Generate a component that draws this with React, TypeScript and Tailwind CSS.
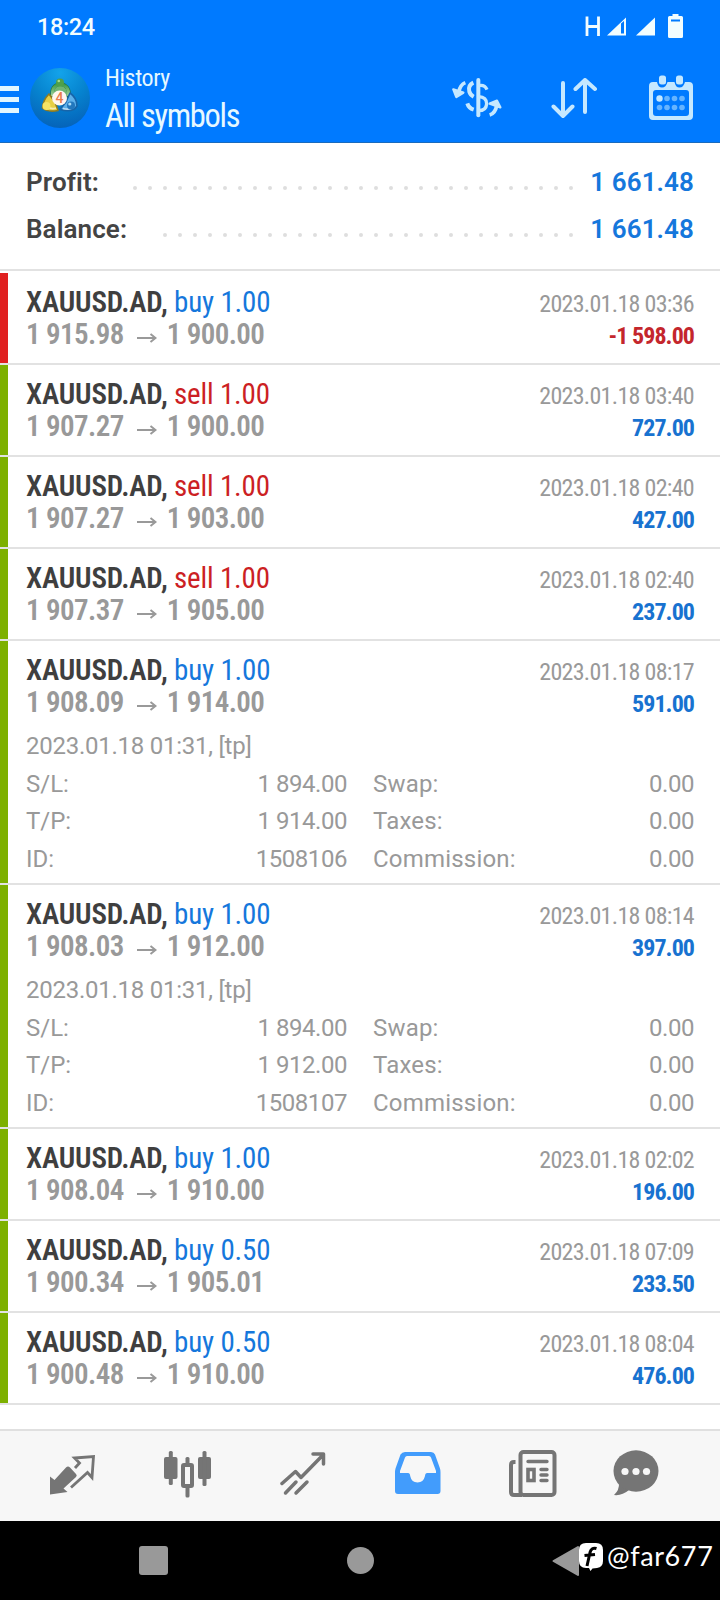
import React from 'react';

interface Deal {
  side: 'buy' | 'sell';
  volume: string;
  open: string;
  close: string;
  time: string;
  profit: string;
  details?: { opened: string; sl: string; tp: string; id: string };
}

const deals: Deal[] = [
  { side: 'buy', volume: '1.00', open: '1 915.98', close: '1 900.00', time: '2023.01.18 03:36', profit: '-1 598.00' },
  { side: 'sell', volume: '1.00', open: '1 907.27', close: '1 900.00', time: '2023.01.18 03:40', profit: '727.00' },
  { side: 'sell', volume: '1.00', open: '1 907.27', close: '1 903.00', time: '2023.01.18 02:40', profit: '427.00' },
  { side: 'sell', volume: '1.00', open: '1 907.37', close: '1 905.00', time: '2023.01.18 02:40', profit: '237.00' },
  {
    side: 'buy', volume: '1.00', open: '1 908.09', close: '1 914.00', time: '2023.01.18 08:17', profit: '591.00',
    details: { opened: '2023.01.18 01:31, [tp]', sl: '1 894.00', tp: '1 914.00', id: '1508106' },
  },
  {
    side: 'buy', volume: '1.00', open: '1 908.03', close: '1 912.00', time: '2023.01.18 08:14', profit: '397.00',
    details: { opened: '2023.01.18 01:31, [tp]', sl: '1 894.00', tp: '1 912.00', id: '1508107' },
  },
  { side: 'buy', volume: '1.00', open: '1 908.04', close: '1 910.00', time: '2023.01.18 02:02', profit: '196.00' },
  { side: 'buy', volume: '0.50', open: '1 900.34', close: '1 905.01', time: '2023.01.18 07:09', profit: '233.50' },
  { side: 'buy', volume: '0.50', open: '1 900.48', close: '1 910.00', time: '2023.01.18 08:04', profit: '476.00' },
];

const StatusBar: React.FC = () => (
  <div className="flex h-[54px] items-center justify-between pl-[37px] pr-[36px] text-[#f2fdff]">
    <span className="text-[23.5px] font-medium leading-8 tracking-[-0.4px]">18:24</span>
    <svg width="100" height="28" viewBox="0 0 100 28" fill="currentColor">
      <path d="M3 3.500v19.500M14.500 3.500v19.500M3 13.500h12" stroke="currentColor" strokeWidth="2.800" fill="none" />
      <path fillRule="evenodd" d="M23 22.500 42 4.500V22.500ZM37 10.500V20.500H40V8Z" />
      <path d="M52 22.500 71 4.500V22.500Z" />
      <path fillRule="evenodd" d="M88.500 1h6v2h3q1.500 0 1.500 1.500v19q0 1.500-1.500 1.500h-12q-1.500 0-1.500-1.500v-19Q84 3 85.500 3h3ZM87 6.500v2h9v-2Z" />
    </svg>
  </div>
);

const Logo: React.FC = () => (
  <svg className="ml-[11px] shrink-0" width="60" height="60" viewBox="0 0 60 60">
    <defs>
      <radialGradient id="sky" cx="50%" cy="8%" r="95%">
        <stop offset="0" stopColor="#13a3ea" />
        <stop offset="0.5" stopColor="#0683cf" />
        <stop offset="1" stopColor="#0561b8" />
      </radialGradient>
      <linearGradient id="leaf" x1="0" y1="0" x2="0" y2="1">
        <stop offset="0" stopColor="#3f9b49" />
        <stop offset="1" stopColor="#a5d5a0" />
      </linearGradient>
    </defs>
    <circle cx="30" cy="30" r="30" fill="url(#sky)" />
    <path d="M22 29q-1-12 8-13 10 1 9 13Z" fill="#6fb573" stroke="#25703a" strokeWidth="3.500" strokeLinejoin="round" />
    <path d="M22.500 28q-1-11 7.500-11.500 9.500.5 8.500 11.500" fill="none" stroke="url(#leaf)" strokeWidth="3" />
    <path d="M19 26q-6 6-6.500 14 5 4.500 15.500 2.500L25 34Z" fill="#e6cf45" stroke="#917c20" strokeWidth="1.600" strokeLinejoin="round" />
    <path d="M40 25q7 5 7 13-4 7-17 3.500L36 34Z" fill="#5cb0ea" stroke="#1764a8" strokeWidth="1.600" strokeLinejoin="round" />
    <path d="M18 39q3 2.500 8 1M33 40.500q5 1.500 9-.5" fill="none" stroke="#fff" strokeOpacity="0.600" strokeWidth="1.800" />
    <circle cx="30" cy="14.500" r="4" fill="#4fa04a" />
    <circle cx="28.800" cy="13" r="1.300" fill="#a4dc8d" />
    <circle cx="16.500" cy="38" r="4" fill="#f4e365" />
    <circle cx="41" cy="37.500" r="4" fill="#2277bd" />
    <circle cx="39.800" cy="36" r="1.600" fill="#a9dcf8" />
    <circle cx="29.500" cy="30" r="7.500" fill="#fff6ef" />
    <text x="29.500" y="35" textAnchor="middle" fontSize="14" fontWeight="500" fill="#ea7d4c">4</text>
  </svg>
);

const Header: React.FC = () => (
  <header className="h-[143px] border-b border-[#1a6bbd] bg-[#007aff]">
    <StatusBar />
    <div className="flex h-[88px] items-center text-[#d9f3ff]">
      <div className="flex w-[19px] shrink-0 flex-col gap-[6.500px] pt-[3px]">
        <span className="h-[4.500px] bg-[#e2f6ff]" />
        <span className="h-[4.500px] bg-[#e2f6ff]" />
        <span className="h-[4.500px] bg-[#e2f6ff]" />
      </div>
      <Logo />
      <div className="ml-[15px] flex-1 [font-stretch:75%]">
        <div className="text-[24px] leading-[34px] tracking-[-0.400px] text-[#e6f8ff]">History</div>
        <div className="mt-[2px] text-[32.500px] leading-[38px] tracking-[-1.300px] text-[#e6f8ff]">All symbols</div>
      </div>
      <svg className="mr-[49px]" width="50" height="42" viewBox="0 0 150 126" fill="none" stroke="#c5e8ff">
        <path d="M79 9v106" strokeWidth="12" strokeLinecap="round" />
        <path d="M80 26q18-4 25 12M80 59q24 1 24 22-2 20-24 20" strokeWidth="10" />
        <path d="M64 17q-17 8-12 27 3 10 13 15M46 79q4 14 19 19" strokeWidth="12" />
        <path d="M40 17q-15 6-20 28" strokeWidth="11" />
        <path d="M4 37 34 47 13 60Z" fill="#c5e8ff" strokeWidth="7" strokeLinejoin="round" />
        <path d="M113 114q17-5 21-28" strokeWidth="11" />
        <path d="M113 80l22-9 10 20Z" fill="#c5e8ff" strokeWidth="7" strokeLinejoin="round" />
      </svg>
      <svg className="mr-[52px]" width="46" height="42" viewBox="0 0 46 42" fill="none" stroke="#c5e8ff" strokeWidth="4" strokeLinecap="round" strokeLinejoin="round">
        <path d="M12 6v33M2.500 29.500 12 39l9.500-9.500" />
        <path d="M34 35V3M24.500 12 34 3l10 9" />
      </svg>
      <svg className="mr-[27px]" width="44" height="46" viewBox="0 0 44 46">
        <path fillRule="evenodd" fill="#c5e8ff" d="M4 7h4q1 5.500 5 5.500T18.500 7h7q1 5.500 5 5.500T36 7h4q4 0 4 4v30q0 4-4 4H4q-4 0-4-4V11q0-4 4-4Zm3 8q-3 0-3 3v20q0 3 3 3h30q3 0 3-3V18q0-3-3-3Z" />
        <rect x="10" y="0.500" width="7" height="9" rx="2.500" fill="#c5e8ff" />
        <rect x="27" y="0.500" width="7" height="9" rx="2.500" fill="#c5e8ff" />
        <circle cx="10.500" cy="23.500" r="3.200" fill="#c5e8ff" />
        <g fill="#66b4ff">
          <circle cx="18" cy="23.500" r="2.800" />
          <circle cx="25.500" cy="23.500" r="2.800" />
          <circle cx="33" cy="23.500" r="2.800" />
          <circle cx="10.500" cy="32.500" r="2.800" />
          <circle cx="18" cy="32.500" r="2.800" />
          <circle cx="25.500" cy="32.500" r="2.800" />
          <circle cx="33" cy="32.500" r="2.800" />
        </g>
      </svg>
    </div>
  </header>
);

const SummaryRow: React.FC<{ label: string; value: string; dots: number }> = ({ label, value, dots }) => (
  <div className="flex h-[47px] items-center justify-between">
    <span className="text-[26px] font-semibold tracking-[0.100px] text-[#444]">{label}</span>
    <div className="ml-auto mr-[17px] flex gap-[11.050px] pt-[11px]">
      {Array.from({ length: dots }).map((_, i) => (
        <span key={i} className="h-1 w-1 rounded-full bg-[#dedede]" />
      ))}
    </div>
    <span className="text-[26px] font-semibold tracking-[0.100px] text-[#1577dc]">{value}</span>
  </div>
);

const DetailRow: React.FC<{ left: string; leftValue: string; right: string }> = ({ left, leftValue, right }) => (
  <div className="flex h-[37.500px] items-center">
    <span>{left}</span>
    <span className="ml-auto tracking-[-0.450px]">{leftValue}</span>
    <div className="ml-[26px] flex w-[321px] justify-between">
      <span className="tracking-[0.200px]">{right}</span>
      <span className="tracking-[-0.450px]">0.00</span>
    </div>
  </div>
);

const DealRow: React.FC<{ deal: Deal }> = ({ deal }) => {
  const loss = deal.profit.startsWith('-');

  return (
    <div className="border-b-2 border-[#e2e2e2]">
      <div className={`border-l-8 pl-[18px] pr-[26px] ${loss ? 'border-[#e02020]' : 'border-[#7db000]'} ${deal.details ? 'h-[242px]' : 'h-[90px]'}`}>
        <div className="flex h-[77px] justify-between pt-[13px] [font-stretch:75%]">
          <div>
            <div className="text-[29px] leading-8 tracking-[-0.180px]">
              <span className="font-semibold text-[#3f3f3f]">XAUUSD.AD,</span>{' '}
              <span className={deal.side === 'buy' ? 'text-[#1577dc]' : 'text-[#cc1f24]'}>
                {deal.side} {deal.volume}
              </span>
            </div>
            <div className="flex items-center text-[29px] font-semibold leading-8 tracking-[-0.600px] text-[#999]">
              {deal.open}
              <svg className="ml-[13px] mr-[10px] mt-[7px]" width="20" height="12" viewBox="0 0 20 12" fill="none" stroke="#999" strokeWidth="2">
                <path d="M0 6h18.500M13.500 2 18.500 6l-5 4" />
              </svg>
              {deal.close}
            </div>
          </div>
          <div className="pt-[1.500px] text-right text-[24px] leading-8">
            <div className="tracking-[-0.700px] text-[#999]">{deal.time}</div>
            <div className={`font-bold tracking-[-0.950px] ${loss ? 'text-[#c4262c]' : 'text-[#1872d0]'}`}>{deal.profit}</div>
          </div>
        </div>
        {deal.details && (
          <div className="pt-[9px] text-[24px] text-[#999]">
            <div className="flex h-[38px] items-center tracking-[-0.250px]">{deal.details.opened}</div>
            <DetailRow left="S/L:" leftValue={deal.details.sl} right="Swap:" />
            <DetailRow left="T/P:" leftValue={deal.details.tp} right="Taxes:" />
            <DetailRow left="ID:" leftValue={deal.details.id} right="Commission:" />
          </div>
        )}
      </div>
    </div>
  );
};

const TabBar: React.FC = () => (
  <nav className="flex h-[92px] items-start border-t-2 border-[#e0e0e0] bg-[#f7f7f7] pl-[49px] pt-[19px] text-[#757575]">
    <svg className="mr-[68px]" width="47" height="48" viewBox="0 0 47 48">
      <path fill="currentColor" d="M1 26.500 5.500 30 17 17.500q2-2 4 0l6 6.500q1.500 1.500 0 3L14.500 38.500 18.500 42 1 44.500Z" />
      <path fill="none" stroke="currentColor" strokeWidth="2.800" d="M22 37.500 38.500 22.500 43 27.500 44.500 6.500 25.500 8l5 5-4.500 5" />
    </svg>
    <svg className="mr-[68px]" width="48" height="48" viewBox="0 0 48 48">
      <g fill="currentColor">
        <rect x="0" y="7" width="13.500" height="22" rx="2" />
        <rect x="4.800" y="1" width="4" height="34" rx="1.500" />
        <rect x="34" y="7" width="13" height="22" rx="2" />
        <rect x="38.500" y="1" width="4" height="35" rx="1.500" />
        <rect x="21.500" y="7" width="4" height="8" rx="1.500" />
        <rect x="21.500" y="36" width="4" height="11.500" rx="1.500" />
      </g>
      <rect x="19" y="15" width="9" height="21" rx="1" fill="none" stroke="currentColor" strokeWidth="4" />
    </svg>
    <svg className="mr-[69px]" width="46" height="48" viewBox="0 0 46 48" fill="none" stroke="currentColor" strokeWidth="3.500" strokeLinecap="round" strokeLinejoin="round">
      <path d="M2 33.500 15.500 21.500 21 27.500 42.500 5.500M33 4h10.500v10" />
      <path d="M5.500 43 16 32M16 43 27 32" />
    </svg>
    <svg className="mr-[68px]" width="46" height="48" viewBox="0 0 46 48">
      <path fill="#429cfc" fillRule="evenodd" d="M10 2h26q3 0 4 2.500l5 14q.5 1.500.5 4V41q0 3-3 3H3q-3 0-3-3V22.500q0-2 .500-4L5.500 4.500Q7 2 10 2ZM12 6q-1.500 0-2 1.500L5 21v2h8q2 0 2.200 3Q16.500 32.500 22.500 32.500T30 26q.200-3 2.200-3H41V21L36 7.500Q35.500 6 34 6Z" />
    </svg>
    <svg className="mr-[56px]" width="48" height="48" viewBox="0 0 48 48" fill="none" stroke="currentColor">
      <rect x="11.500" y="2" width="34" height="43" rx="3" strokeWidth="4" />
      <path d="M6.500 12H5q-3 0-3 3v27q0 3 3 3h8" strokeWidth="4" />
      <path d="M19 11.500h19M32 19.500h6M32 25h6M32 30.500h6" strokeWidth="3.400" strokeLinecap="round" />
      <rect x="19" y="19.500" width="6" height="11" strokeWidth="3.600" />
    </svg>
    <svg width="46" height="48" viewBox="0 0 46 48">
      <path fill="currentColor" d="M6 33q.500 7-5 12 8 1 15-5Z" />
      <ellipse cx="23" cy="21" rx="22.500" ry="20.700" fill="currentColor" />
      <g fill="#f7f7f7">
        <circle cx="12" cy="21.500" r="3.600" />
        <circle cx="23" cy="21.500" r="3.600" />
        <circle cx="33.500" cy="21.500" r="3.600" />
      </g>
    </svg>
  </nav>
);

const SystemNav: React.FC = () => (
  <div className="flex h-[79px] items-center bg-black pl-[139px]">
    <div className="h-[29px] w-[29px] rounded-[3px] bg-[#999]" />
    <div className="ml-[179px] h-[27px] w-[27px] rounded-full bg-[#999]" />
    <svg className="ml-[178px]" width="27" height="32" viewBox="0 0 27 32">
      <path fill="#999" stroke="#999" strokeWidth="2" strokeLinejoin="round" d="M1.500 16 26 2V30Z" />
    </svg>
    <svg className="-mt-[7px]" width="24" height="28" viewBox="0 0 24 28">
      <path fill="#fff" d="M7 0h10q7 0 7 7v11q0 6-6 7l-4.500.5L11.500 28 10 25H7q-7 0-7-7V7Q0 0 7 0Z" />
      <path d="M17.500 5.500q-5-1.500-6.500 4L8 23M5.500 12.500 16 11.500" fill="none" stroke="#000" strokeWidth="3" />
    </svg>
    <span className="ml-1 -mt-[10px] text-[27px] leading-8 tracking-[0.600px] text-white [font-family:Lato,sans-serif]">@far677</span>
  </div>
);

export default function App() {
  return (
    <div className="flex h-[1600px] w-[720px] flex-col overflow-hidden bg-white [font-family:Roboto,sans-serif]">
      <Header />
      <section className="h-[128px] border-b-2 border-[#e2e2e2] pl-[26px] pr-[26px] pt-[16px]">
        <SummaryRow label="Profit:" value="1 661.48" dots={30} />
        <SummaryRow label="Balance:" value="1 661.48" dots={28} />
      </section>
      <main className="flex-1 pt-[2px]">
        {deals.map((deal, i) => (
          <DealRow key={i} deal={deal} />
        ))}
      </main>
      <TabBar />
      <SystemNav />
    </div>
  );
}
